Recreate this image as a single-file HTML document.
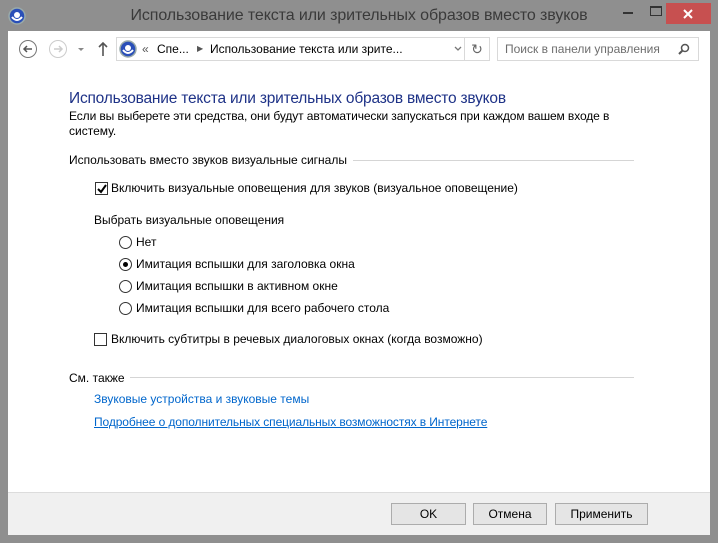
<!DOCTYPE html>
<html><head><meta charset="utf-8"><style>
*{margin:0;padding:0;box-sizing:border-box}
body{width:718px;height:543px;background:#8f8f8f;font-family:"Liberation Sans",sans-serif;font-size:12px;color:#000;position:relative;overflow:hidden}
.a{position:absolute;white-space:nowrap}
.client{position:absolute;left:8px;top:31px;width:702px;height:504px;background:#fff}
.foot{position:absolute;left:0;top:461px;width:702px;height:43px;background:#f0f0f0;border-top:1px solid #dcdcdc}
.btn{position:absolute;top:10px;height:22px;background:#e5e5e5;border:1px solid #acacac;text-align:center;line-height:20px;font-size:12px}
.cb{position:absolute;width:13px;height:13px;border:1px solid #333;background:#fff}
.rb{position:absolute;width:13px;height:13px;border:1px solid #333;border-radius:50%;background:#fff}
.line{position:absolute;height:1px;background:#d5d5d5}
.lk{color:#0066cc}
</style></head><body>
<svg class="a" style="left:8px;top:7px" width="18" height="18"><circle cx="9" cy="9" r="8" fill="#2a4fb8" stroke="#9aa" stroke-width="1.5"/><circle cx="9" cy="8" r="3" fill="#fff"/><path d="M4 10 Q9 16 14 10" stroke="#fff" stroke-width="2" fill="none"/></svg>
<div class="a" style="left:0;width:718px;top:7px;text-align:center;font-size:16px;color:#3a3a3a;letter-spacing:-0.1px">Использование текста или зрительных образов вместо звуков</div>
<div class="a" style="left:623px;top:12px;width:10px;height:2px;background:#333"></div>
<div class="a" style="left:650px;top:6px;width:12px;height:10px;border:1px solid #333;border-top-width:2px"></div>
<div class="a" style="left:666px;top:3px;width:45px;height:21px;background:#c75050"></div>
<svg class="a" style="left:683px;top:9px" width="10" height="10"><path d="M1 1L9 9M9 1L1 9" stroke="#fff" stroke-width="2"/></svg>
<div class="client">
<svg class="a" style="left:10px;top:8px" width="90" height="20"><circle cx="10" cy="10" r="8.5" fill="none" stroke="#777"/><path d="M14 10H6M9 7L6 10L9 13" stroke="#555" stroke-width="1.5" fill="none"/><circle cx="40" cy="10" r="8.5" fill="none" stroke="#ccc"/><path d="M36 10H44M41 7L44 10L41 13" stroke="#ccc" stroke-width="1.5" fill="none"/><path d="M60 9L66 9L63 12Z" fill="#888"/><path d="M85 17V4M81 8L85 4L89 8" stroke="#555" stroke-width="1.6" fill="none"/></svg>
<div class="a" style="left:108px;top:6px;width:349px;height:24px;border:1px solid #d9d9d9"></div>
<svg class="a" style="left:111px;top:9px" width="18" height="18"><circle cx="9" cy="9" r="8" fill="#2a4fb8" stroke="#9aa" stroke-width="1.5"/><circle cx="9" cy="8" r="3" fill="#fff"/><path d="M4 10 Q9 16 14 10" stroke="#fff" stroke-width="2" fill="none"/></svg>
<div class="a" style="left:134px;top:11px;color:#555">«</div>
<div class="a" style="left:149px;top:11px">Спе...</div>
<div class="a" style="left:189px;top:13px;color:#555;font-size:8px">▶</div>
<div class="a" style="left:202px;top:11px">Использование текста или зрите...</div>
<svg class="a" style="left:446px;top:15px" width="8" height="6"><path d="M1 1L4 4L7 1" stroke="#777" stroke-width="1.3" fill="none"/></svg>
<div class="a" style="left:457px;top:6px;width:25px;height:24px;border:1px solid #d9d9d9;border-left:none;text-align:center;line-height:22px;color:#666;font-size:14px">↻</div>
<div class="a" style="left:489px;top:6px;width:202px;height:24px;border:1px solid #d9d9d9"></div>
<div class="a" style="left:497px;top:11px;color:#6d6d6d">Поиск в панели управления</div>
<svg class="a" style="left:670px;top:12px" width="12" height="12"><circle cx="7" cy="5" r="3.5" fill="none" stroke="#555" stroke-width="1.5"/><path d="M4.5 7.5L1 11" stroke="#555" stroke-width="2"/></svg>
<div class="a" style="left:61px;top:59px;font-size:15.5px;color:#1e3287;letter-spacing:-0.2px">Использование текста или зрительных образов вместо звуков</div>
<div class="a" style="left:61px;top:78px;letter-spacing:-0.1px">Если вы выберете эти средства, они будут автоматически запускаться при каждом вашем входе в</div>
<div class="a" style="left:61px;top:93px">систему.</div>
<div class="a" style="left:61px;top:122px">Использовать вместо звуков визуальные сигналы</div>
<div class="line" style="left:345px;top:129px;width:281px"></div>
<div class="cb" style="left:87px;top:151px"></div>
<svg class="a" style="left:89px;top:153px" width="10" height="10"><path d="M1 5L4 8L9 1" stroke="#000" stroke-width="2" fill="none"/></svg>
<div class="a" style="left:103px;top:150px">Включить визуальные оповещения для звуков (визуальное оповещение)</div>
<div class="a" style="left:86px;top:182px">Выбрать визуальные оповещения</div>
<div class="rb" style="left:111px;top:205px"></div><div class="a" style="left:128px;top:204px">Нет</div>
<div class="rb" style="left:111px;top:227px"></div><div class="a" style="left:115px;top:231px;width:5px;height:5px;border-radius:50%;background:#000"></div><div class="a" style="left:128px;top:226px">Имитация вспышки для заголовка окна</div>
<div class="rb" style="left:111px;top:249px"></div><div class="a" style="left:128px;top:248px">Имитация вспышки в активном окне</div>
<div class="rb" style="left:111px;top:271px"></div><div class="a" style="left:128px;top:270px">Имитация вспышки для всего рабочего стола</div>
<div class="cb" style="left:86px;top:302px"></div>
<div class="a" style="left:103px;top:301px">Включить субтитры в речевых диалоговых окнах (когда возможно)</div>
<div class="a" style="left:61px;top:340px">См. также</div>
<div class="line" style="left:122px;top:346px;width:504px"></div>
<div class="a lk" style="left:86px;top:361px">Звуковые устройства и звуковые темы</div>
<div class="a lk" style="left:86px;top:384px;text-decoration:underline;letter-spacing:-0.1px">Подробнее о дополнительных специальных возможностях в Интернете</div>
<div class="foot">
<div class="btn" style="left:383px;width:75px">OK</div>
<div class="btn" style="left:465px;width:74px">Отмена</div>
<div class="btn" style="left:547px;width:93px">Применить</div>
</div>
</div>
</body></html>
